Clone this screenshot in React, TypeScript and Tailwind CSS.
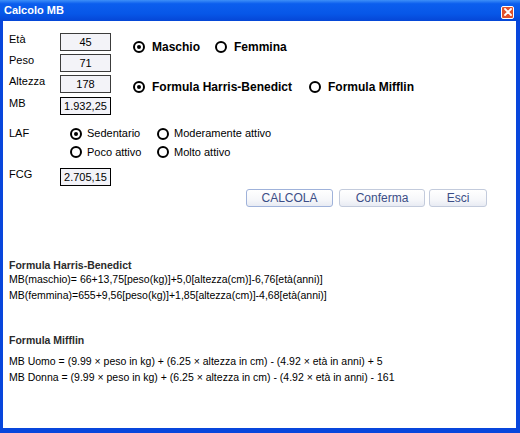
import React from "react";

type RadioProps = {
  label: string;
  checked?: boolean;
  bold?: boolean;
  width?: string;
};

function Radio({ label, checked, bold, width }: RadioProps) {
  return (
    <div className={`flex items-center ${bold ? "gap-[7px]" : "gap-[5px]"} ${width ?? ""}`}>
      <span className="w-[12px] h-[12px] shrink-0 rounded-full border-2 border-black bg-white flex items-center justify-center">
        {checked && <span className="w-[4px] h-[4px] rounded-full bg-black" />}
      </span>
      <span className={bold ? "text-[12px] font-bold whitespace-nowrap" : "text-[11px] whitespace-nowrap"}>{label}</span>
    </div>
  );
}

function Field({ label, value, strong, className }: { label: string; value: string; strong?: boolean; className?: string }) {
  return (
    <div className={`flex items-start ${className ?? ""}`}>
      <span className="w-[51px] text-[11px] leading-[13px]">{label}</span>
      <span
        className={`w-[51px] h-[18px] flex items-center justify-center text-[11px] bg-[#f3f3f8] border ${
          strong ? "border-black" : "border-[#3c3c3c]"
        }`}
      >
        {value}
      </span>
    </div>
  );
}

function XpButton({ label, className }: { label: string; className: string }) {
  return (
    <button
      className={`h-[18px] rounded-[3px] border bg-[linear-gradient(180deg,#ffffff_0%,#f6f7fa_60%,#e8ebf3_100%)] text-[12px] text-[#3b4d86] leading-none ${className}`}
    >
      {label}
    </button>
  );
}

export default function App() {
  return (
    <div className="w-[520px] h-[433px] bg-[#0846dc] flex flex-col font-['Liberation_Sans',Arial,sans-serif] text-black">
      {/* title bar */}
      <div className="h-[21px] flex items-center justify-between pl-[4px] pr-[6px] bg-[linear-gradient(180deg,#3d8ff8_0%,#0b5eee_18%,#0757e8_65%,#0546d6_100%)]">
        <span className="text-white font-bold text-[11px]">Calcolo MB</span>
        <span className="mt-[3px] w-[13px] h-[13px] rounded-[2px] border border-white bg-[#e0512c] flex items-center justify-center">
          <svg width="8" height="8" viewBox="0 0 8 8">
            <path d="M1 1L7 7M7 1L1 7" stroke="white" strokeWidth="1.8" strokeLinecap="round" />
          </svg>
        </span>
      </div>

      <div className="flex-1 ml-[3px] mr-[4px] mb-[5px] bg-white flex flex-col">
        {/* dati + sesso/formula */}
        <div className="flex pt-[12px]">
          <div className="w-[130px] shrink-0 pl-[6px] flex flex-col">
            <Field label="Età" value="45" />
            <Field label="Peso" value="71" className="mt-[3px]" />
            <Field label="Altezza" value="178" className="mt-[3px]" />
            <Field label="MB" value="1.932,25" strong className="mt-[4px]" />
          </div>
          <div className="flex flex-col">
            <div className="flex h-[14px] mt-[7px]">
              <Radio label="Maschio" checked bold width="w-[82px]" />
              <Radio label="Femmina" bold />
            </div>
            <div className="flex h-[14px] mt-[26px]">
              <Radio label="Formula Harris-Benedict" checked bold width="w-[176px]" />
              <Radio label="Formula Mifflin" bold />
            </div>
          </div>
        </div>

        {/* LAF */}
        <div className="flex mt-[9px] pl-[6px]">
          <span className="w-[61px] text-[11px] leading-[19px]">LAF</span>
          <div className="grid grid-cols-[87px_auto]">
            <div className="h-[19px] flex items-center">
              <Radio label="Sedentario" checked />
            </div>
            <div className="h-[19px] flex items-center">
              <Radio label="Moderamente attivo" />
            </div>
            <div className="h-[18px] flex items-center">
              <Radio label="Poco attivo" />
            </div>
            <div className="h-[18px] flex items-center">
              <Radio label="Molto attivo" />
            </div>
          </div>
        </div>

        <div className="pl-[6px] mt-[7px]">
          <Field label="FCG" value="2.705,15" strong />
        </div>

        {/* pulsanti */}
        <div className="flex mt-[3px] pl-[243px]">
          <XpButton label="CALCOLA" className="w-[87px] border-[#9fb2da]" />
          <XpButton label="Conferma" className="w-[86px] ml-[6px] border-[#c3cbdc]" />
          <XpButton label="Esci" className="w-[58px] ml-[4px] border-[#c3cbdc]" />
        </div>

        {/* formule */}
        <div className="pl-[6px] mt-[52px] text-[10.5px]">
          <p className="font-bold leading-[12px] text-[#2b2b2b]">Formula Harris-Benedict</p>
          <p className="leading-[16px]">MB(maschio)= 66+13,75[peso(kg)]+5,0[altezza(cm)]-6,76[età(anni)]</p>
          <p className="leading-[16px]">MB(femmina)=655+9,56[peso(kg)]+1,85[altezza(cm)]-4,68[età(anni)]</p>
        </div>

        <div className="pl-[6px] mt-[31px] text-[10.5px]">
          <p className="font-bold leading-[12px] text-[#2b2b2b]">Formula Mifflin</p>
          <p className="leading-[16px] mt-[7px]">MB Uomo = (9.99 × peso in kg) + (6.25 × altezza in cm) - (4.92 × età in anni) + 5</p>
          <p className="leading-[16px]">MB Donna = (9.99 × peso in kg) + (6.25 × altezza in cm) - (4.92 × età in anni) - 161</p>
        </div>
      </div>
    </div>
  );
}
